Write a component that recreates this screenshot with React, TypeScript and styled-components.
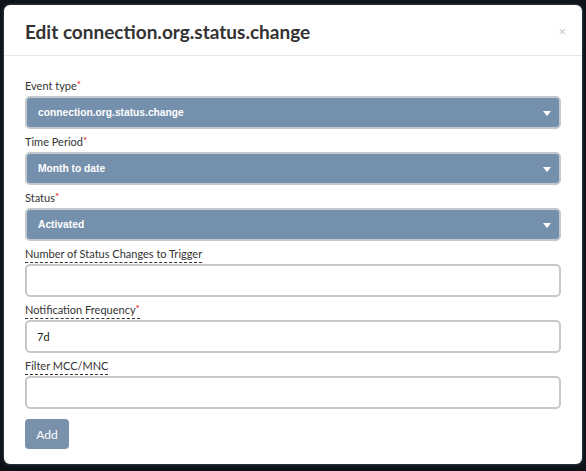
import styled, { createGlobalStyle } from "styled-components";

const GlobalStyle = createGlobalStyle`
    html, body {
        margin: 0;
        padding: 0;
        background: #0e1319;
        font-family: "Lato", "Liberation Sans", sans-serif;
    }
`;

const Backdrop = styled.div`
    width: 586px;
    height: 471px;
    box-sizing: border-box;
    padding: 5px 4px;
    background: #0e1319;
`;

const Modal = styled.div`
    background: #fff;
    border-radius: 6px;
    box-shadow: 0 0 3px rgba(120, 150, 170, 0.6);
    display: flex;
    flex-direction: column;
`;

const Header = styled.div`
    flex-shrink: 0;
    display: flex;
    align-items: center;
    justify-content: space-between;
    height: 50px;
    padding: 0 16px 0 21px;
    border-bottom: 1px solid #e5e8eb;
`;

const Title = styled.h4`
    margin: 0;
    padding-top: 2px;
    font-family: "Lato", sans-serif;
    font-weight: 700;
    font-size: 19px;
    color: #333;
`;

const Close = styled.button`
    border: none;
    background: none;
    padding: 0;
    margin-top: 2px;
    color: #c6c9cc;
    font-size: 13px;
    font-family: "Liberation Sans", sans-serif;
    cursor: pointer;
`;

const Body = styled.form`
    padding: 17px 21px 15px 21px;
    display: flex;
    flex-direction: column;
`;

const Field = styled.div`
    display: flex;
    flex-direction: column;
`;

const Label = styled.label<{ $hint?: boolean }>`
    align-self: flex-start;
    margin-top: 5px;
    margin-bottom: 1px;
    font-size: 11px;
    line-height: 16px;
    color: #333;
    border-bottom: 1px dashed ${(p) => (p.$hint ? "#333" : "transparent")};
`;

const Req = styled.span`
    color: #e00;
    font-size: 10px;
    vertical-align: top;
    line-height: 12px;
`;

const SelectBox = styled.div`
    position: relative;
    height: 33px;
    box-sizing: border-box;
    border: 2px solid #c4c8cc;
    border-radius: 5px;
    background: #7590ad;
    color: #fff;
    font-family: "Liberation Sans", sans-serif;
    font-weight: 700;
    font-size: 10.25px;
    display: flex;
    align-items: center;
    padding: 0 11px;
`;

const Caret = styled.span`
    position: absolute;
    right: 8px;
    top: 13px;
    width: 0;
    height: 0;
    border-left: 4px solid transparent;
    border-right: 4px solid transparent;
    border-top: 5px solid #fff;
`;

const Input = styled.input`
    height: 33px;
    box-sizing: border-box;
    border: 2px solid #c4c8cc;
    border-radius: 5px;
    background: #fff;
    padding: 0 10px;
    font-family: "Lato", sans-serif;
    font-size: 11px;
    color: #222;
    outline: none;
`;

const Button = styled.button`
    margin-top: 10px;
    align-self: flex-start;
    width: 44px;
    height: 30px;
    border: none;
    border-radius: 4px;
    background: #7a91ab;
    color: #fff;
    font-family: "Lato", sans-serif;
    font-size: 12px;
`;

const selects = [
    { label: "Event type", value: "connection.org.status.change" },
    { label: "Time Period", value: "Month to date" },
    { label: "Status", value: "Activated" },
];

const inputs = [
    { label: "Number of Status Changes to Trigger", value: "", required: false },
    { label: "Notification Frequency", value: "7d", required: true },
    { label: "Filter MCC/MNC", value: "", required: false },
];

export default function App() {
    return (
        <>
            <GlobalStyle />
            <Backdrop>
                <Modal>
                    <Header>
                        <Title>Edit connection.org.status.change</Title>
                        <Close type="button">×</Close>
                    </Header>
                    <Body onSubmit={(e) => e.preventDefault()}>
                        {selects.map((s) => (
                            <Field key={s.label}>
                                <Label>
                                    {s.label}
                                    <Req>*</Req>
                                </Label>
                                <SelectBox>
                                    {s.value}
                                    <Caret />
                                </SelectBox>
                            </Field>
                        ))}
                        {inputs.map((f) => (
                            <Field key={f.label}>
                                <Label $hint>
                                    {f.label}
                                    {f.required && <Req>*</Req>}
                                </Label>
                                <Input defaultValue={f.value} />
                            </Field>
                        ))}
                        <Button type="submit">Add</Button>
                    </Body>
                </Modal>
            </Backdrop>
        </>
    );
}
